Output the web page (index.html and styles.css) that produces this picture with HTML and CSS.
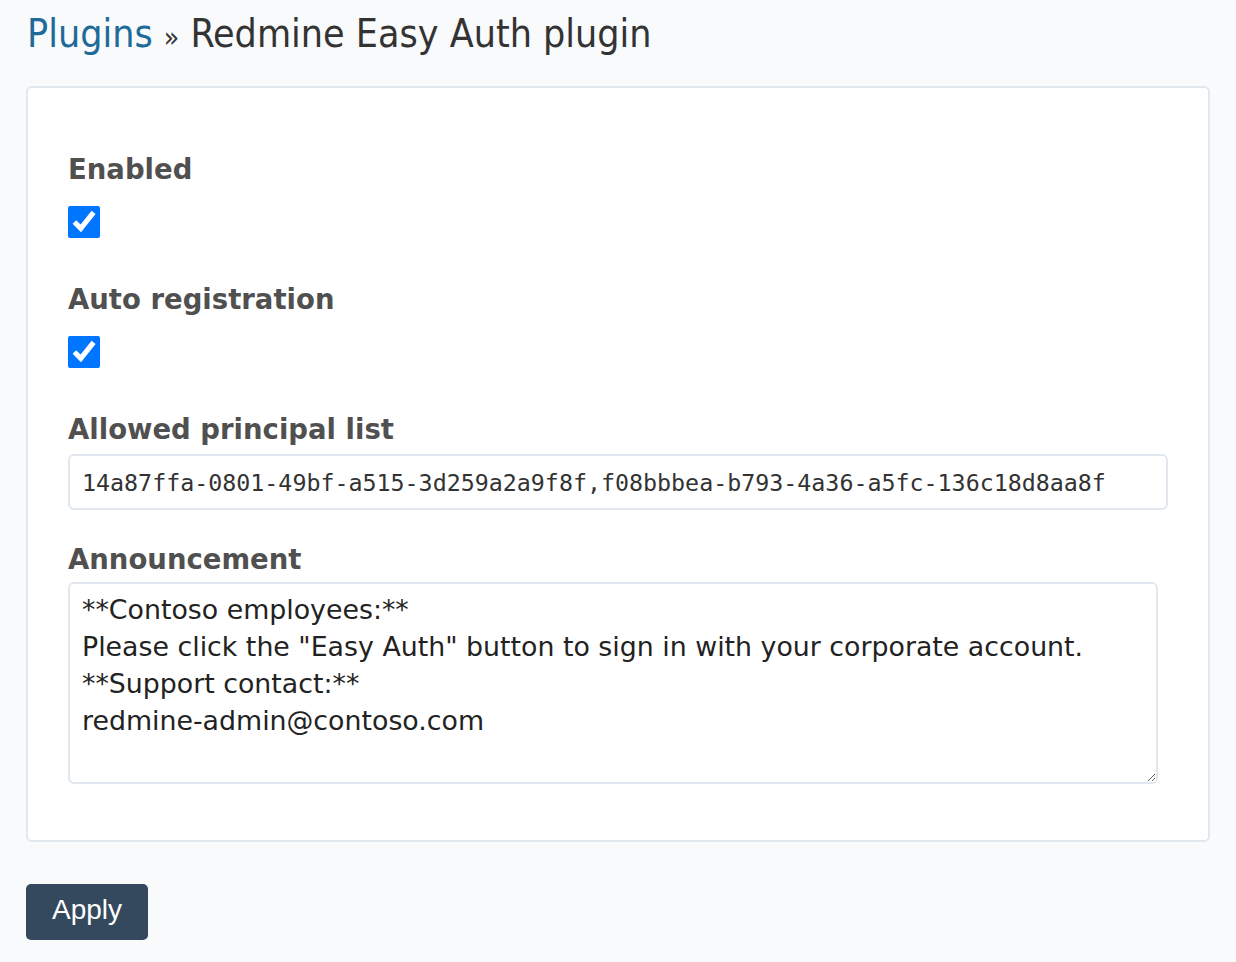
FILE: index.html
```html
<!DOCTYPE html>
<html>
<head>
<meta charset="utf-8">
<link rel="stylesheet" href="styles.css">
</head>
<body>
<h2 class="title"><a class="crumb" href="#">Plugins</a> <span class="sep">»</span> Redmine Easy Auth plugin</h2>
<form class="settings">
  <div class="box">
    <div class="field">
      <label class="lbl">Enabled</label>
      <input type="checkbox" class="chk" checked>
    </div>
    <div class="field">
      <label class="lbl">Auto registration</label>
      <input type="checkbox" class="chk" checked>
    </div>
    <div class="field">
      <label class="lbl">Allowed principal list</label>
      <input type="text" class="txt" value="14a87ffa-0801-49bf-a515-3d259a2a9f8f,f08bbbea-b793-4a36-a5fc-136c18d8aa8f">
    </div>
    <div class="field field-area">
      <label class="lbl">Announcement</label>
      <textarea class="area">**Contoso employees:**
Please click the "Easy Auth" button to sign in with your corporate account.
**Support contact:**
redmine-admin@contoso.com</textarea>
    </div>
  </div>
  <button type="button" class="apply">Apply</button>
</form>
</body>
</html>
```
FILE: styles.css
```css
html, body {
  margin: 0;
  background: #f9fafc;
}
body {
  padding: 8px 26px 20px 26px;
  font-family: "DejaVu Sans", Verdana, sans-serif;
  color: #333;
}
.title {
  margin: 0 0 22px 1px;
  font-family: "DejaVu Sans Condensed", "DejaVu Sans", sans-serif;
  font-weight: normal;
  font-size: 39px;
  line-height: 52px;
  color: #333;
}
.crumb {
  color: #1e6a99;
  text-decoration: none;
}
.sep {
  font-size: 28px;
}
.settings {
  margin: 0;
}
.box {
  background: #fff;
  border: 2px solid #e1e7ef;
  border-radius: 6px;
  padding: 65px 40px 56px 40px;
  display: flex;
  flex-direction: column;
  gap: 33px;
}
.field {
  display: flex;
  flex-direction: column;
  align-items: flex-start;
  gap: 9px;
}
.field-area {
  gap: 7px;
}
.lbl {
  font-weight: bold;
  font-size: 27.5px;
  line-height: 32px;
  color: #505050;
}
.chk {
  margin: 12px 0 12px 0;
  width: 32px;
  height: 32px;
  accent-color: #0075ff;
}
.txt {
  box-sizing: border-box;
  width: 100%;
  height: 56px;
  margin: 0;
  padding: 0 12px;
  border: 2px solid #e1e7ef;
  border-radius: 6px;
  font-family: "DejaVu Sans Mono", monospace;
  font-size: 23.3px;
  color: #333;
  background: #fff;
}
.area {
  box-sizing: border-box;
  width: 1090px;
  height: 202px;
  margin: 0;
  padding: 7px 12px 6px 12px;
  border: 2px solid #e1e7ef;
  border-radius: 6px;
  font-family: "DejaVu Sans", sans-serif;
  font-size: 26.8px;
  line-height: 37px;
  color: #222;
  background: #fff;
  resize: vertical;
}
.apply {
  margin-top: 42px;
  width: 122px;
  height: 56px;
  border: none;
  border-radius: 5px;
  background: #34495e;
  color: #fff;
  font-family: "Liberation Sans", Arial, sans-serif;
  font-size: 28px;
  padding: 0 0 4px 0;
}
```
